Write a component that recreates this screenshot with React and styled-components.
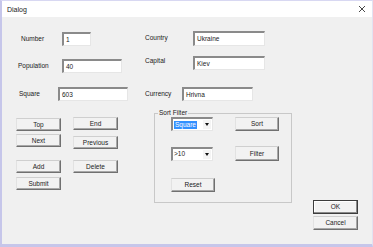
import React from 'react';
import styled, { createGlobalStyle } from 'styled-components';

const GlobalStyle = createGlobalStyle`
  html, body {
    margin: 0;
    padding: 0;
    background: #ffffff;
  }
  * {
    box-sizing: border-box;
  }
`;

const FONT = `"Liberation Sans", Arial, sans-serif`;

const Window = styled.div`
  width: 373px;
  height: 247px;
  display: flex;
  flex-direction: column;
  border-top: 1px solid #d8d8f2;
  border-left: 2px solid #c6c6ea;
  border-bottom: 3px solid #c6c6ea;
  border-right: 1px solid #e2e2f2;
  font-family: ${FONT};
  font-size: 6.5px;
  color: #1a1a1a;
`;

const TitleBar = styled.div`
  height: 16px;
  background: #ffffff;
  display: flex;
  align-items: center;
  justify-content: space-between;
  padding: 0 6px 0 5px;
`;

const Title = styled.span`
  font-size: 7px;
  color: #222;
`;

const Body = styled.div`
  flex: 1;
  background: #f0f0f0;
  display: flex;
  flex-direction: column;
`;

const Fields = styled.div`
  display: grid;
  grid-template-columns: 141px 1fr;
`;

const FieldColumn = styled.div`
  display: flex;
  flex-direction: column;
`;

const Field = styled.div`
  display: flex;
  align-items: center;
  margin-top: ${p => p.$top}px;
  padding-left: ${p => p.$lx}px;
`;

const Label = styled.span`
  width: ${p => p.$w}px;
  flex-shrink: 0;
  line-height: 8px;
  position: relative;
  top: ${p => p.$dy || 0}px;
`;

const TextBox = styled.div`
  width: ${p => p.$w}px;
  height: ${p => p.$h || 14}px;
  background: #ffffff;
  border-style: solid;
  border-width: 2px 1px 1px 2px;
  border-color: #8a8a8a #e6e6e6 #e6e6e6 #8a8a8a;
  display: flex;
  align-items: center;
  padding-left: 2px;
  line-height: 8px;
`;

const Lower = styled.div`
  display: flex;
  align-items: flex-start;
  margin-top: 8px;
`;

const ButtonCols = styled.div`
  display: flex;
  gap: 12px;
  margin-left: 14px;
`;

const ButtonCol = styled.div`
  display: flex;
  flex-direction: column;
  margin-top: ${p => p.$top}px;
`;

const Button = styled.button`
  width: ${p => p.$w || 45}px;
  height: ${p => p.$h || 13}px;
  margin-top: ${p => p.$top || 0}px;
  padding: 0;
  background: #f2f2f2;
  border: 1px solid;
  border-color: ${p => (p.$default ? '#3c3c3c' : '#cfcfcf #707070 #707070 #e2e2e2')};
  box-shadow: ${p => (p.$default ? 'inset -1px -1px #8a8a8a, inset 1px 1px #ffffff' : 'inset -1px -1px #a8a8a8')};
  font-family: ${FONT};
  font-size: 6.5px;
  line-height: 8px;
  color: #1a1a1a;
  flex-shrink: 0;
`;

const GroupBox = styled.fieldset`
  margin: 0 0 0 36px;
  padding: 0;
  width: 138px;
  min-width: 0;
  border: 1px solid #c8c8c8;
`;

const Legend = styled.legend`
  margin-left: 3px;
  padding: 0 1px;
  line-height: 8px;
  font-size: 6.5px;
`;

const GroupContent = styled.div`
  padding: 0 0 10px 16px;
`;

const GroupRow = styled.div`
  display: flex;
  align-items: center;
  gap: 22px;
  margin-top: ${p => p.$top || 0}px;
`;

const Combo = styled.div`
  width: 42px;
  height: 14px;
  background: #ffffff;
  border-style: solid;
  border-width: 2px 1px 1px 2px;
  border-color: #8a8a8a #e6e6e6 #e6e6e6 #8a8a8a;
  display: flex;
  align-items: center;
  padding-right: 1px;
`;

const ComboText = styled.div`
  flex: 1;
  display: flex;
  align-items: center;
  padding-left: 1px;
  line-height: 8px;
`;

const Selected = styled.span`
  background: #3390ff;
  color: #ffffff;
  padding: 0 1px;
`;

const Arrow = styled.div`
  width: 8px;
  height: 9px;
  background: #f4f4f4;
  display: flex;
  align-items: center;
  justify-content: center;

  &::after {
    content: '';
    border-left: 2px solid transparent;
    border-right: 2px solid transparent;
    border-top: 3px solid #111;
  }
`;

const DialogButtons = styled.div`
  display: flex;
  flex-direction: column;
  gap: 2px;
  margin-left: 21px;
  margin-top: 91px;
`;

const CloseIcon = () => (
  <svg width="8" height="8" viewBox="0 0 8 8">
    <path d="M1 1L7 7M7 1L1 7" stroke="#333" strokeWidth="0.9" />
  </svg>
);

const App = () => {
  return (
    <>
      <GlobalStyle />
      <Window>
        <TitleBar>
          <Title>Dialog</Title>
          <CloseIcon />
        </TitleBar>
        <Body>
          <Fields>
            <FieldColumn>
              <Field $top={15} $lx={19}>
                <Label $w={41}>Number</Label>
                <TextBox $w={29}>1</TextBox>
              </Field>
              <Field $top={13} $lx={16}>
                <Label $w={44}>Population</Label>
                <TextBox $w={60}>40</TextBox>
              </Field>
              <Field $top={14} $lx={17}>
                <Label $w={39}>Square</Label>
                <TextBox $w={70}>603</TextBox>
              </Field>
            </FieldColumn>
            <FieldColumn>
              <Field $top={14} $lx={2}>
                <Label $w={48} $dy={-1}>Country</Label>
                <TextBox $w={72} $h={15}>Ukraine</TextBox>
              </Field>
              <Field $top={10} $lx={2}>
                <Label $w={48} $dy={-2}>Capital</Label>
                <TextBox $w={72}>Kiev</TextBox>
              </Field>
              <Field $top={17} $lx={2}>
                <Label $w={37}>Currency</Label>
                <TextBox $w={71}>Hrivna</TextBox>
              </Field>
            </FieldColumn>
          </Fields>

          <Lower>
            <ButtonCols>
              <ButtonCol $top={9}>
                <Button>Top</Button>
                <Button $top={3}>Next</Button>
                <Button $top={13}>Add</Button>
                <Button $top={4}>Submit</Button>
              </ButtonCol>
              <ButtonCol $top={8}>
                <Button>End</Button>
                <Button $top={6}>Previous</Button>
                <Button $top={11}>Delete</Button>
              </ButtonCol>
            </ButtonCols>

            <GroupBox>
              <Legend>Sort Filter</Legend>
              <GroupContent>
                <GroupRow>
                  <Combo>
                    <ComboText><Selected>Square</Selected></ComboText>
                    <Arrow />
                  </Combo>
                  <Button $w={44} $h={14}>Sort</Button>
                </GroupRow>
                <GroupRow $top={15}>
                  <Combo>
                    <ComboText>&gt;10</ComboText>
                    <Arrow />
                  </Combo>
                  <Button $w={44} $h={15}>Filter</Button>
                </GroupRow>
                <GroupRow $top={17}>
                  <Button $w={44} $h={14}>Reset</Button>
                </GroupRow>
              </GroupContent>
            </GroupBox>

            <DialogButtons>
              <Button $default $h={14}>OK</Button>
              <Button $h={14}>Cancel</Button>
            </DialogButtons>
          </Lower>
        </Body>
      </Window>
    </>
  );
};

export default App;
